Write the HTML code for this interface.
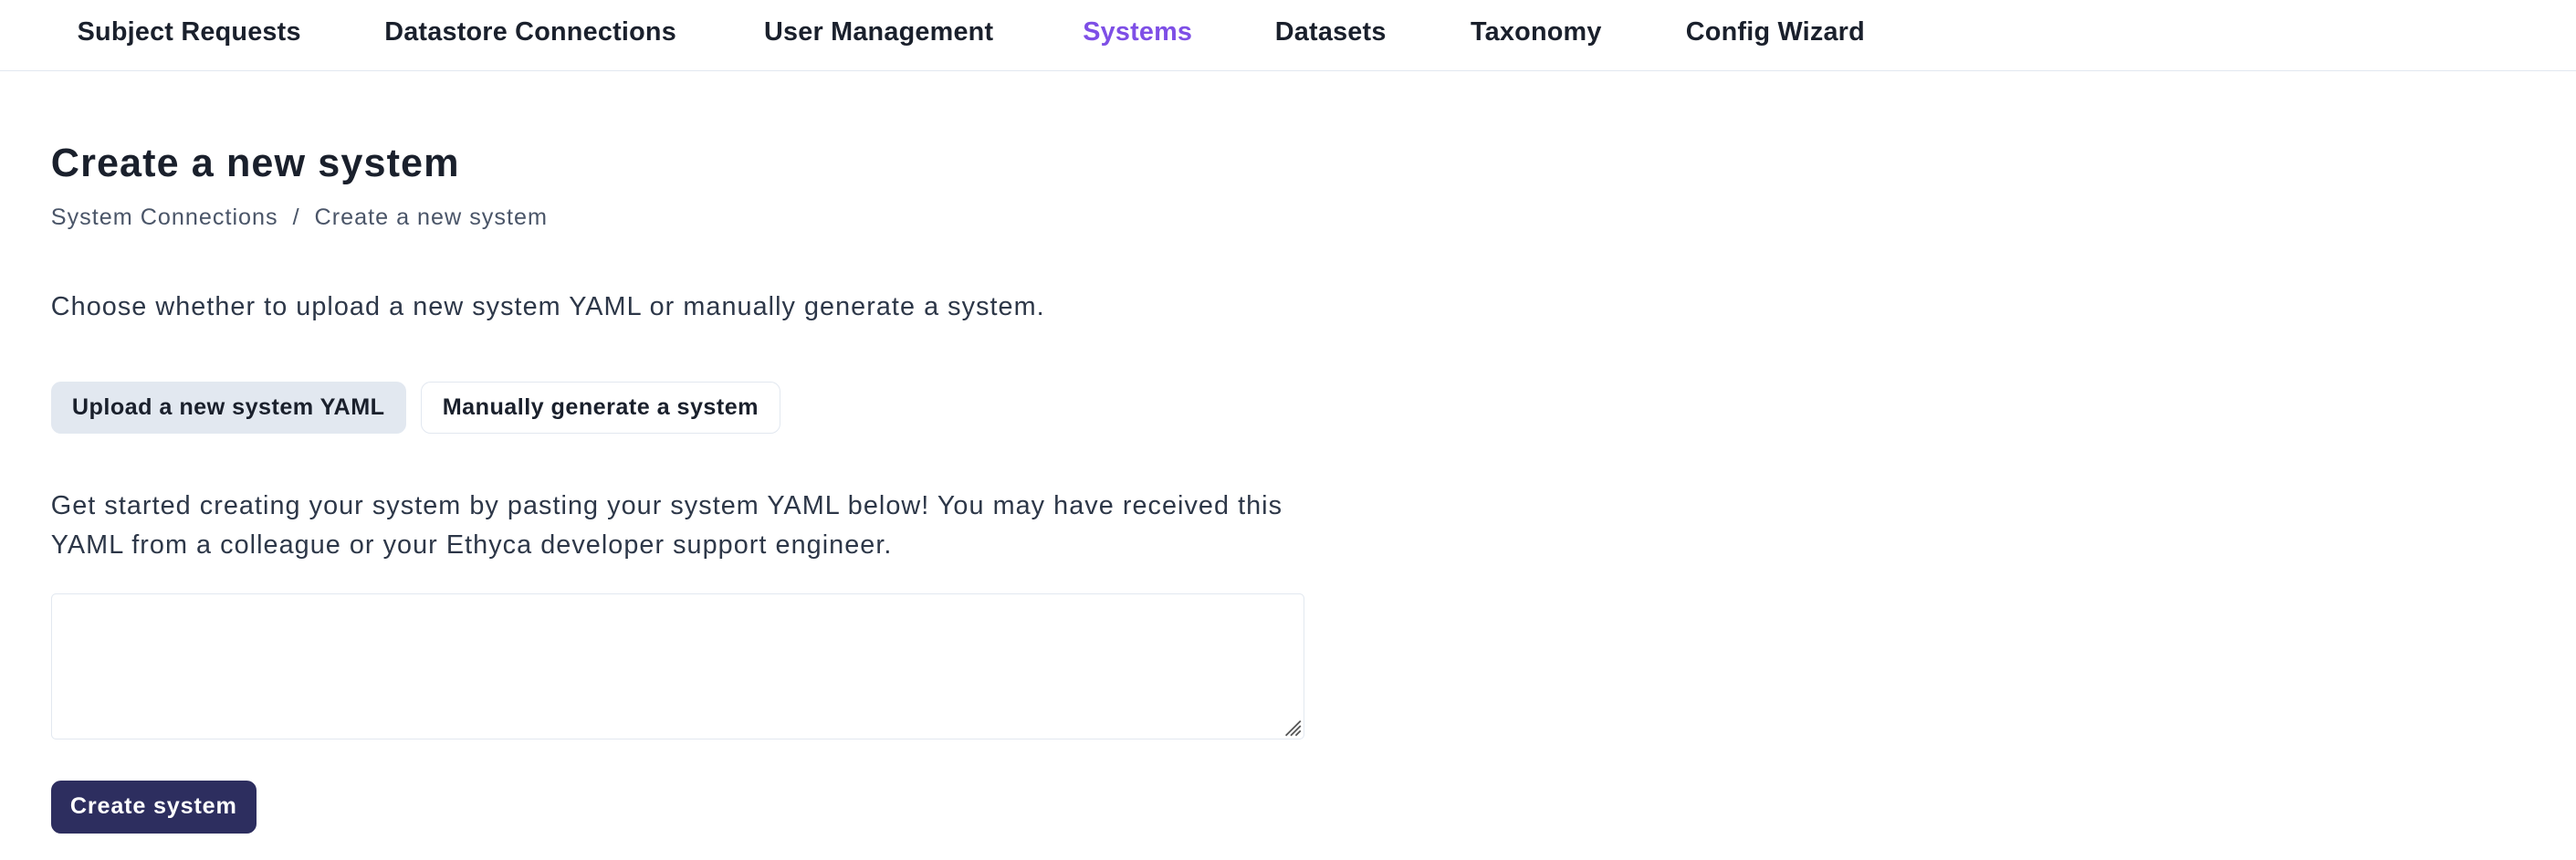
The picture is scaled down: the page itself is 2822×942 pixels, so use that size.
<!DOCTYPE html>
<html><head><meta charset="utf-8"><style>
html,body{margin:0;padding:0;background:#fff}
body{zoom:1.8;width:1568px;height:523px;overflow:hidden;font-family:"Liberation Sans",sans-serif;color:#1a202c;position:relative}
.nav{position:absolute;top:0;left:0;right:0;height:43px;border-bottom:1px solid #e2e8f0}
.nav span{position:absolute;top:10px;font-size:16px;font-weight:700;line-height:19px;letter-spacing:0.12px}
h1{position:absolute;left:31px;top:85px;margin:0;font-size:24px;font-weight:700;line-height:29px;letter-spacing:0.6px}
.bc{position:absolute;left:31px;top:124px;font-size:14px;color:#4a5568;line-height:17px;letter-spacing:0.55px}
.p{position:absolute;left:31px;font-size:16px;color:#2d3748;line-height:24px;letter-spacing:0.58px}
.btn{position:absolute;top:232px;height:32px;box-sizing:border-box;border-radius:6px;font-size:14px;font-weight:700;line-height:30px;text-align:center;letter-spacing:0.25px}
.ta{position:absolute;left:31px;top:361px;width:763px;height:89px;box-sizing:border-box;border:1px solid #e2e8f0;border-radius:3px}
</style></head><body>
<div class="nav">
<span style="left:47px">Subject Requests</span>
<span style="left:234px">Datastore Connections</span>
<span style="left:465px">User Management</span>
<span style="left:659px;color:#7e4fe6">Systems</span>
<span style="left:776px">Datasets</span>
<span style="left:895px">Taxonomy</span>
<span style="left:1026px">Config Wizard</span>
</div>
<h1>Create a new system</h1>
<div class="bc">System Connections &nbsp;/&nbsp; Create a new system</div>
<div class="p" style="top:175px">Choose whether to upload a new system YAML or manually generate a system.</div>
<div class="btn" style="left:31px;width:216px;background:#e2e8f0;border:1px solid #e2e8f0">Upload a new system YAML</div>
<div class="btn" style="left:256px;width:219px;background:#fff;border:1px solid #e2e8f0">Manually generate a system</div>
<div class="p" style="top:296px">Get started creating your system by pasting your system YAML below! You may have received this<br>YAML from a colleague or your Ethyca developer support engineer.</div>
<div class="ta"><svg style="position:absolute;right:1px;bottom:1px" width="12" height="12" viewBox="0 0 12 12"><path d="M11 2L2 11M11 5L5 11M11 8L8 11" stroke="#555" stroke-width="1"/></svg></div>
<div class="btn" style="left:31px;top:475px;width:125px;background:#2d2e5f;color:#fff;border:1px solid #2d2e5f;letter-spacing:0.45px">Create system</div>
</body></html>
